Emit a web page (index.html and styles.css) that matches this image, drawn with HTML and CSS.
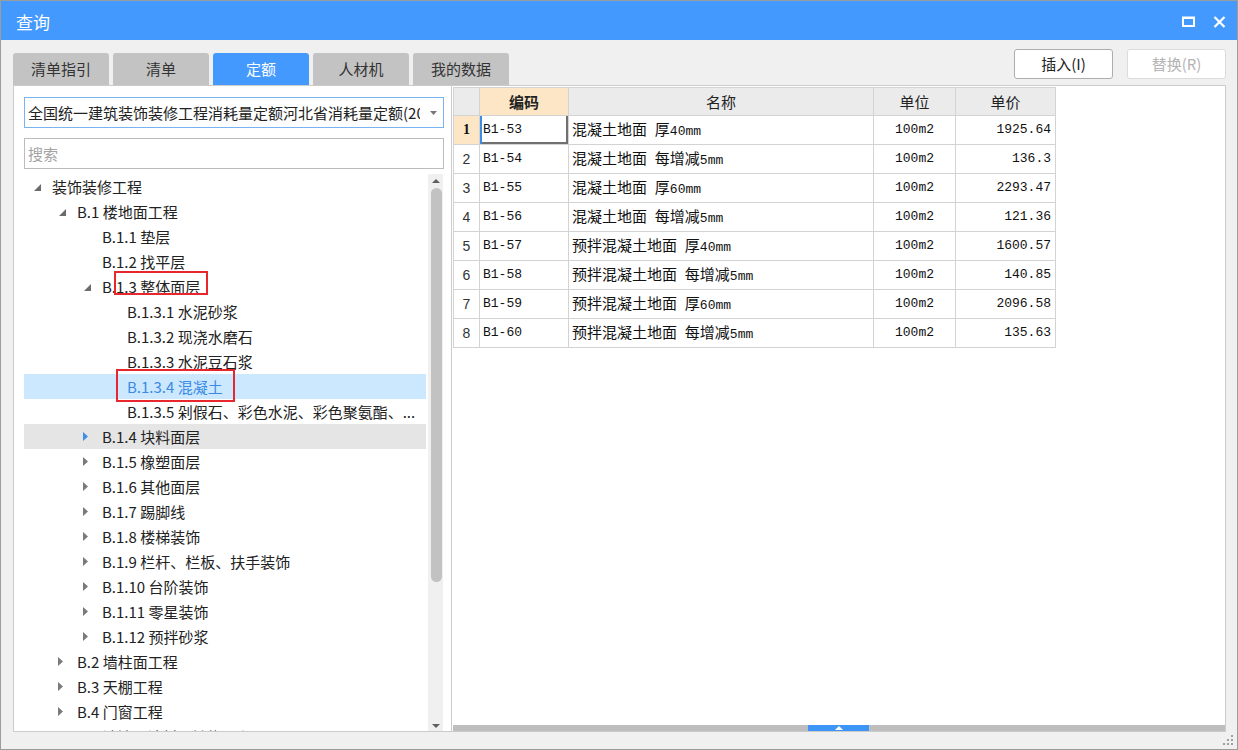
FILE: index.html
```html
<!DOCTYPE html>
<html lang="zh-CN">
<head>
<meta charset="utf-8">
<title>查询</title>
<link rel="stylesheet" href="styles.css">
</head>
<body>
<div class="window">
  <div class="titlebar">
    <span class="title">查询</span>
    <div class="win-btns">
      <svg class="ico-max" width="13" height="11" viewBox="0 0 13 11"><rect x="1" y="1.5" width="11" height="8.5" fill="none" stroke="#fff" stroke-width="2"/><rect x="1" y="1" width="11" height="2" fill="#fff"/></svg>
      <svg class="ico-close" width="13" height="12" viewBox="0 0 13 12"><path d="M1.5 1L11.5 11M11.5 1L1.5 11" stroke="#fff" stroke-width="2.2" fill="none"/></svg>
    </div>
  </div>

  <div class="toprow">
    <div class="tabs">
      <div class="tab">清单指引</div>
      <div class="tab">清单</div>
      <div class="tab active">定额</div>
      <div class="tab">人材机</div>
      <div class="tab">我的数据</div>
    </div>
    <div class="actions">
      <button class="btn">插入(I)</button>
      <button class="btn" disabled>替换(R)</button>
    </div>
  </div>

  <div class="panels">
    <div class="left">
      <div class="select">
        <span class="select-text">全国统一建筑装饰装修工程消耗量定额河北省消耗量定额(2019)</span>
        <svg class="select-arrow" width="7" height="4" viewBox="0 0 7 4"><path d="M0 0H7L3.5 4Z" fill="#777"/></svg>
      </div>
      <div class="search">搜索</div>
      <div class="tree">
        <div class="tree-list">
          <div class="row l0"><span class="tw"><svg class="ex" width="7" height="7" viewBox="0 0 7 7"><path d="M7 0V7H0Z" fill="#6b6b6b"/></svg></span><span class="lbl">装饰装修工程</span></div>
          <div class="row l1"><span class="tw"><svg class="ex" width="7" height="7" viewBox="0 0 7 7"><path d="M7 0V7H0Z" fill="#6b6b6b"/></svg></span><span class="lbl">B.1 楼地面工程</span></div>
          <div class="row l2"><span class="tw"></span><span class="lbl">B.1.1 垫层</span></div>
          <div class="row l2"><span class="tw"></span><span class="lbl">B.1.2 找平层</span></div>
          <div class="row l2"><span class="tw"><svg class="ex" width="7" height="7" viewBox="0 0 7 7"><path d="M7 0V7H0Z" fill="#6b6b6b"/></svg></span><span class="lbl">B.1.3 整体面层</span><span class="mark mark1"></span></div>
          <div class="row l3"><span class="tw"></span><span class="lbl">B.1.3.1 水泥砂浆</span></div>
          <div class="row l3"><span class="tw"></span><span class="lbl">B.1.3.2 现浇水磨石</span></div>
          <div class="row l3"><span class="tw"></span><span class="lbl">B.1.3.3 水泥豆石浆</span></div>
          <div class="row l3 selected"><span class="tw"></span><span class="lbl">B.1.3.4 混凝土</span><span class="mark mark2"></span></div>
          <div class="row l3"><span class="tw"></span><span class="lbl">B.1.3.5 剁假石、彩色水泥、彩色聚氨酯、...</span></div>
          <div class="row l2 hover"><span class="tw"><svg class="co" width="5" height="9" viewBox="0 0 5 9"><path d="M0 0L5 4.5L0 9Z" fill="#3d8fe8"/></svg></span><span class="lbl">B.1.4 块料面层</span></div>
          <div class="row l2"><span class="tw"><svg class="co" width="5" height="9" viewBox="0 0 5 9"><path d="M0 0L5 4.5L0 9Z" fill="#7a7a7a"/></svg></span><span class="lbl">B.1.5 橡塑面层</span></div>
          <div class="row l2"><span class="tw"><svg class="co" width="5" height="9" viewBox="0 0 5 9"><path d="M0 0L5 4.5L0 9Z" fill="#7a7a7a"/></svg></span><span class="lbl">B.1.6 其他面层</span></div>
          <div class="row l2"><span class="tw"><svg class="co" width="5" height="9" viewBox="0 0 5 9"><path d="M0 0L5 4.5L0 9Z" fill="#7a7a7a"/></svg></span><span class="lbl">B.1.7 踢脚线</span></div>
          <div class="row l2"><span class="tw"><svg class="co" width="5" height="9" viewBox="0 0 5 9"><path d="M0 0L5 4.5L0 9Z" fill="#7a7a7a"/></svg></span><span class="lbl">B.1.8 楼梯装饰</span></div>
          <div class="row l2"><span class="tw"><svg class="co" width="5" height="9" viewBox="0 0 5 9"><path d="M0 0L5 4.5L0 9Z" fill="#7a7a7a"/></svg></span><span class="lbl">B.1.9 栏杆、栏板、扶手装饰</span></div>
          <div class="row l2"><span class="tw"><svg class="co" width="5" height="9" viewBox="0 0 5 9"><path d="M0 0L5 4.5L0 9Z" fill="#7a7a7a"/></svg></span><span class="lbl">B.1.10 台阶装饰</span></div>
          <div class="row l2"><span class="tw"><svg class="co" width="5" height="9" viewBox="0 0 5 9"><path d="M0 0L5 4.5L0 9Z" fill="#7a7a7a"/></svg></span><span class="lbl">B.1.11 零星装饰</span></div>
          <div class="row l2"><span class="tw"><svg class="co" width="5" height="9" viewBox="0 0 5 9"><path d="M0 0L5 4.5L0 9Z" fill="#7a7a7a"/></svg></span><span class="lbl">B.1.12 预拌砂浆</span></div>
          <div class="row l1"><span class="tw"><svg class="co" width="5" height="9" viewBox="0 0 5 9"><path d="M0 0L5 4.5L0 9Z" fill="#7a7a7a"/></svg></span><span class="lbl">B.2 墙柱面工程</span></div>
          <div class="row l1"><span class="tw"><svg class="co" width="5" height="9" viewBox="0 0 5 9"><path d="M0 0L5 4.5L0 9Z" fill="#7a7a7a"/></svg></span><span class="lbl">B.3 天棚工程</span></div>
          <div class="row l1"><span class="tw"><svg class="co" width="5" height="9" viewBox="0 0 5 9"><path d="M0 0L5 4.5L0 9Z" fill="#7a7a7a"/></svg></span><span class="lbl">B.4 门窗工程</span></div>
          <div class="row l1"><span class="tw"><svg class="co" width="5" height="9" viewBox="0 0 5 9"><path d="M0 0L5 4.5L0 9Z" fill="#7a7a7a"/></svg></span><span class="lbl">B.5 油漆、涂料、裱糊工程</span></div>
        </div>
        <div class="vscroll">
          <svg class="sb-up" width="8" height="4" viewBox="0 0 8 4"><path d="M0 4H8L4 0Z" fill="#606060"/></svg>
          <div class="sb-track"><div class="sb-thumb"></div></div>
          <svg class="sb-down" width="8" height="4" viewBox="0 0 8 4"><path d="M0 0H8L4 4Z" fill="#606060"/></svg>
        </div>
      </div>
    </div>

    <div class="right">
      <div class="grid-area">
        <table class="grid">
          <colgroup>
            <col class="w-num"><col class="w-code"><col class="w-name"><col class="w-unit"><col class="w-price">
          </colgroup>
          <thead>
            <tr>
              <th class="h-num"></th>
              <th class="h-code">编码</th>
              <th>名称</th>
              <th>单位</th>
              <th>单价</th>
            </tr>
          </thead>
          <tbody>
            <tr><td class="num cur">1</td><td class="code active">B1-53</td><td class="name">混凝土地面<span class="m"> </span>厚<span class="m">40mm</span></td><td class="unit">100m2</td><td class="price">1925.64</td></tr>
            <tr><td class="num">2</td><td class="code">B1-54</td><td class="name">混凝土地面<span class="m"> </span>每增减<span class="m">5mm</span></td><td class="unit">100m2</td><td class="price">136.3</td></tr>
            <tr><td class="num">3</td><td class="code">B1-55</td><td class="name">混凝土地面<span class="m"> </span>厚<span class="m">60mm</span></td><td class="unit">100m2</td><td class="price">2293.47</td></tr>
            <tr><td class="num">4</td><td class="code">B1-56</td><td class="name">混凝土地面<span class="m"> </span>每增减<span class="m">5mm</span></td><td class="unit">100m2</td><td class="price">121.36</td></tr>
            <tr><td class="num">5</td><td class="code">B1-57</td><td class="name">预拌混凝土地面<span class="m"> </span>厚<span class="m">40mm</span></td><td class="unit">100m2</td><td class="price">1600.57</td></tr>
            <tr><td class="num">6</td><td class="code">B1-58</td><td class="name">预拌混凝土地面<span class="m"> </span>每增减<span class="m">5mm</span></td><td class="unit">100m2</td><td class="price">140.85</td></tr>
            <tr><td class="num">7</td><td class="code">B1-59</td><td class="name">预拌混凝土地面<span class="m"> </span>厚<span class="m">60mm</span></td><td class="unit">100m2</td><td class="price">2096.58</td></tr>
            <tr><td class="num">8</td><td class="code">B1-60</td><td class="name">预拌混凝土地面<span class="m"> </span>每增减<span class="m">5mm</span></td><td class="unit">100m2</td><td class="price">135.63</td></tr>
          </tbody>
        </table>
      </div>
      <div class="hbar"><div class="hthumb"><svg width="8" height="4" viewBox="0 0 8 4"><path d="M0 4H8L4 0Z" fill="#fff"/></svg></div></div>
    </div>
  </div>

  <div class="statusbar">
    <svg class="grip" width="11" height="11" viewBox="0 0 11 11" fill="#a0a0a0">
      <rect x="8" y="0" width="2" height="2"/>
      <rect x="4" y="4" width="2" height="2"/><rect x="8" y="4" width="2" height="2"/>
      <rect x="0" y="8" width="2" height="2"/><rect x="4" y="8" width="2" height="2"/><rect x="8" y="8" width="2" height="2"/>
    </svg>
  </div>
</div>
</body>
</html>
```
FILE: styles.css
```css
* { box-sizing: border-box; margin: 0; padding: 0; }
html, body { width: 1238px; height: 750px; overflow: hidden; background: #f0f0f0; }
body {
  font-family: "Noto Sans CJK SC", "Microsoft YaHei", sans-serif;
  font-size: 15px;
  color: #222;
}

.window {
  width: 1238px;
  height: 750px;
  border: 1px solid #9c9c9c;
  background: #f0f0f0;
  display: flex;
  flex-direction: column;
}

/* title bar */
.titlebar {
  flex: none;
  height: 39px;
  background: #4499ff;
  color: #fff;
  display: flex;
  align-items: center;
  justify-content: space-between;
  padding: 0 11px 0 15px;
}
.title { font-size: 17px; line-height: 20px; padding-top: 3px; }
.win-btns { display: flex; align-items: center; gap: 18px; padding-top: 2px; }
.win-btns svg { display: block; }

/* tabs + buttons */
.toprow {
  flex: none;
  height: 45px;
  display: flex;
  justify-content: space-between;
  padding: 0 11px 0 12px;
}
.tabs { display: flex; gap: 4px; align-self: flex-end; }
.tab {
  width: 96px;
  height: 32px;
  line-height: 32px;
  text-align: center;
  background: #c3c3c3;
  color: #333;
  border-radius: 3px 3px 0 0;
}
.tab.active { background: #4499ff; color: #fff; }

.actions { display: flex; gap: 14px; padding-top: 9px; }
.btn {
  width: 99px;
  height: 30px;
  border: 1px solid #adadad;
  border-radius: 3px;
  background: #fff;
  font-family: inherit;
  font-size: 15px;
  line-height: 28px;
  color: #222;
}
.btn:disabled { border-color: #dcdcdc; color: #b4b4b4; }

/* panels */
.panels {
  flex: none;
  height: 647px;
  display: flex;
  padding: 0 11px 0 12px;
}
.left {
  width: 439px;
  background: #fff;
  border: 1px solid #cbcbcb;
  padding: 11px 7px 0 10px;
  display: flex;
  flex-direction: column;
}
.select {
  height: 31px;
  border: 1px solid #7ab4f0;
  display: flex;
  align-items: center;
  padding: 0 6px 0 3px;
  gap: 10px;
}
.select-text {
  width: 393px;
  overflow: hidden;
  white-space: nowrap;
  line-height: 20px;
  color: #222;
}
.select-arrow { display: block; flex: none; }
.search {
  margin-top: 10px;
  height: 31px;
  border: 1px solid #bcbcbc;
  padding-left: 3px;
  line-height: 29px;
  color: #a3a3a3;
}

.tree {
  margin-top: 5px;
  flex: 1;
  display: flex;
  min-height: 0;
}
.tree-list { width: 402px; margin-right: 2px; overflow: hidden; }
.row {
  position: relative;
  height: 25px;
  display: flex;
  align-items: center;
  white-space: nowrap;
  color: #222;
}
.row .lbl { line-height: 20px; }
.row.l0 { padding-left: 8px; }
.row.l1 { padding-left: 33px; }
.row.l2 { padding-left: 58px; }
.row.l3 { padding-left: 83px; }
.tw { width: 20px; flex: none; display: flex; align-items: center; }
.tw svg { display: block; }
.tw .ex { margin-left: 2px; margin-top: 1px; }
.tw .co { margin-left: 1px; }
.row.selected { background: #cce8ff; color: #3a8ae6; }
.row.hover { background: #e5e5e5; }

.mark {
  position: absolute;
  border: 2px solid #e8262d;
}
.mark1 { left: 90px; top: -3px; width: 94px; height: 24px; }
.mark2 { left: 92px; top: -5px; width: 119px; height: 33px; }

.vscroll {
  width: 15px;
  background: #f0f0f0;
  display: flex;
  flex-direction: column;
  align-items: center;
}
.sb-up { display: block; margin-top: 5px; flex: none; }
.sb-track { flex: 1; width: 100%; padding-top: 5px; display: flex; justify-content: center; }
.sb-thumb { width: 11px; height: 394px; background: #c2c2c2; border-radius: 6px; margin-left: 1px; }
.sb-down { display: block; margin-bottom: 3px; flex: none; }

/* right grid */
.right {
  flex: 1;
  background: #fff;
  border: 1px solid #cbcbcb;
  border-left: none;
  padding-left: 1px;
  display: flex;
  flex-direction: column;
}
.grid-area { flex: 1; padding-top: 1px; }
.grid {
  border-collapse: collapse;
  table-layout: fixed;
  width: 602px;
}
.w-num { width: 26px; }
.w-code { width: 89px; }
.w-name { width: 305px; }
.w-unit { width: 82px; }
.w-price { width: 100px; }
.grid th, .grid td {
  border: 1px solid #d3d3d3;
  white-space: nowrap;
  overflow: hidden;
}
.grid th {
  height: 28px;
  background: #ebebeb;
  font-weight: normal;
  font-size: 15px;
  line-height: 20px;
  color: #222;
  text-align: center;
}
.grid th.h-code { background: #fde6c6; font-weight: bold; }
.grid td {
  height: 29px;
  font-size: 15px;
  line-height: 20px;
  color: #111;
  padding: 0 3px;
}
.grid td.num {
  text-align: center;
  font-family: "Liberation Sans", sans-serif;
  font-size: 14px;
  color: #333;
  padding: 0;
}
.grid td.num.cur {
  background: #fde6c6;
  font-family: "Liberation Serif", serif;
  font-weight: bold;
  color: #111;
}
.grid td.code, .grid td.unit, .grid td.price, .grid .m {
  font-family: "Liberation Mono", monospace;
  font-size: 13px;
}
.grid td.unit { text-align: center; }
.grid td.price { text-align: right; padding-right: 4px; }
.grid td.active {
  box-shadow: inset 2px 0 0 #3c8de6, inset -2px -2px 0 #707070;
}

.hbar {
  flex: none;
  height: 6px;
  background: #bebebe;
  position: relative;
}
.hthumb {
  position: absolute;
  left: 355px;
  top: 0;
  width: 61px;
  height: 6px;
  background: #3d95f5;
  display: flex;
  justify-content: center;
  align-items: center;
}
.hthumb svg { display: block; }

.statusbar {
  flex: 1;
  display: flex;
  justify-content: flex-end;
  align-items: flex-end;
  padding: 0 3px 3px 0;
}
.grip { display: block; }
```
